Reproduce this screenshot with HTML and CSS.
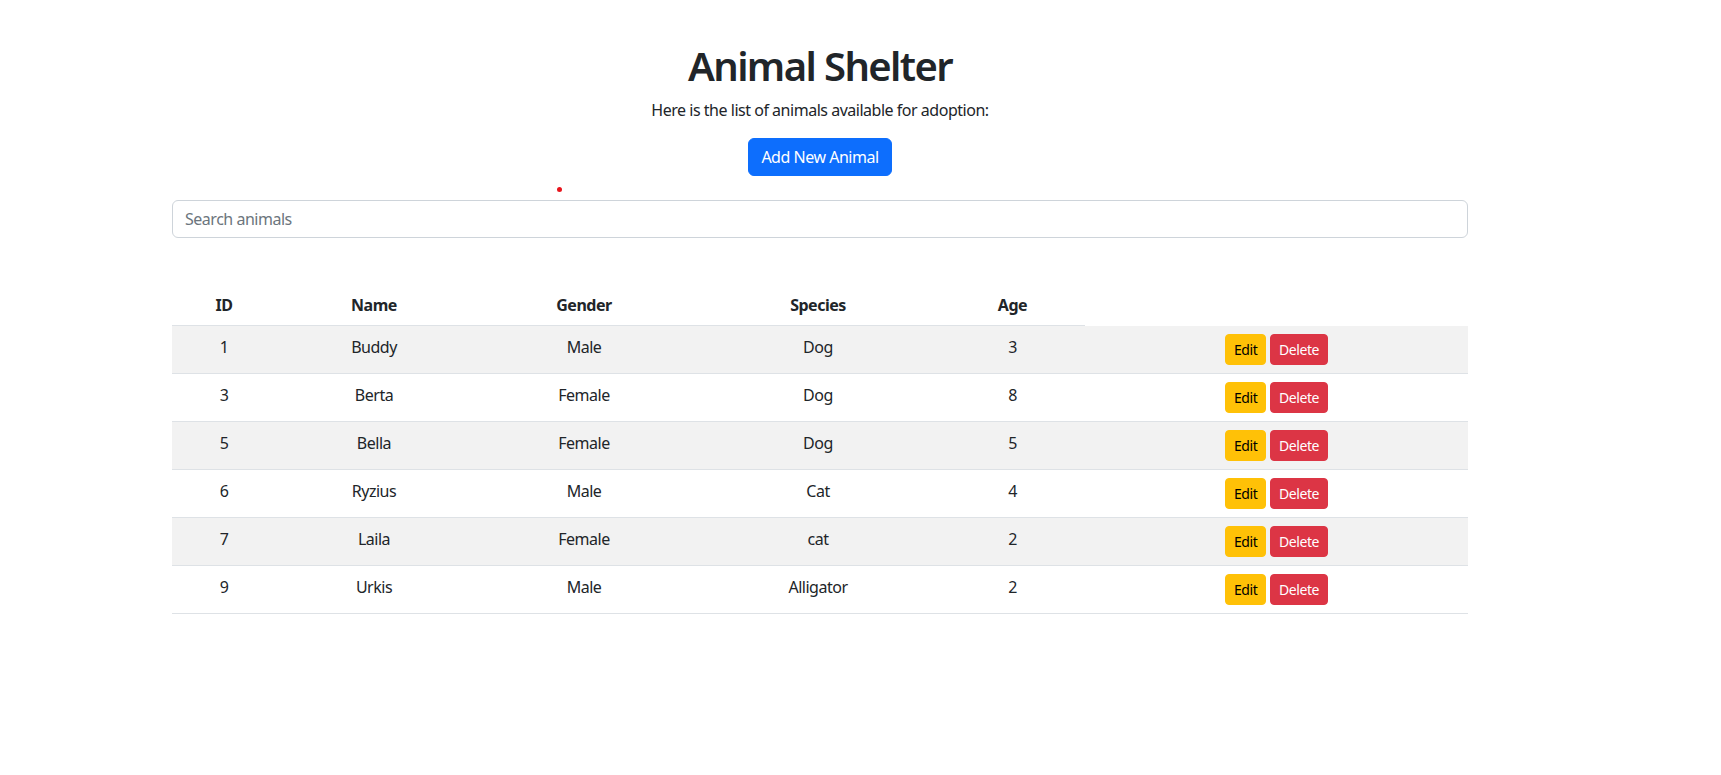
FILE: index.html
```html
<!DOCTYPE html>
<html lang="en">
<head>
<meta charset="utf-8">
<title>Animal Shelter</title>
<link rel="stylesheet" href="styles.css">
</head>
<body>
<div class="container">
  <header class="intro">
    <h1 class="title">Animal Shelter</h1>
    <p class="lead-text">Here is the list of animals available for adoption:</p>
    <button class="btn btn-primary">Add New Animal</button>
  </header>
  <div class="marker-row"><span class="marker-dot"></span></div>
  <input class="search" type="text" placeholder="Search animals">
  <table class="animals">
    <colgroup>
      <col class="c-id"><col class="c-name"><col class="c-gender"><col class="c-species"><col class="c-age"><col class="c-actions">
    </colgroup>
    <thead>
      <tr><th>ID</th><th>Name</th><th>Gender</th><th>Species</th><th>Age</th></tr>
    </thead>
    <tbody>
      <tr><td>1</td><td>Buddy</td><td>Male</td><td>Dog</td><td>3</td><td><button class="btn btn-sm btn-warning">Edit</button> <button class="btn btn-sm btn-danger">Delete</button></td></tr>
      <tr><td>3</td><td>Berta</td><td>Female</td><td>Dog</td><td>8</td><td><button class="btn btn-sm btn-warning">Edit</button> <button class="btn btn-sm btn-danger">Delete</button></td></tr>
      <tr><td>5</td><td>Bella</td><td>Female</td><td>Dog</td><td>5</td><td><button class="btn btn-sm btn-warning">Edit</button> <button class="btn btn-sm btn-danger">Delete</button></td></tr>
      <tr><td>6</td><td>Ryzius</td><td>Male</td><td>Cat</td><td>4</td><td><button class="btn btn-sm btn-warning">Edit</button> <button class="btn btn-sm btn-danger">Delete</button></td></tr>
      <tr><td>7</td><td>Laila</td><td>Female</td><td>cat</td><td>2</td><td><button class="btn btn-sm btn-warning">Edit</button> <button class="btn btn-sm btn-danger">Delete</button></td></tr>
      <tr><td>9</td><td>Urkis</td><td>Male</td><td>Alligator</td><td>2</td><td><button class="btn btn-sm btn-warning">Edit</button> <button class="btn btn-sm btn-danger">Delete</button></td></tr>
    </tbody>
  </table>
</div>
</body>
</html>
```
FILE: styles.css
```css
* { box-sizing: border-box; }
html, body { margin: 0; padding: 0; background: #fff; }
body {
  font-family: "Noto Sans", "Open Sans", sans-serif;
  font-size: 16px;
  line-height: 1.5;
  letter-spacing: -0.03em;
  color: #212529;
}
.container {
  width: 1320px;
  margin-left: 160px;
  padding: 42px 12px 0;
}
.intro { text-align: center; }
.title {
  margin: 0 0 8px;
  font-size: 40px;
  font-weight: 600;
  line-height: 1.2;
  letter-spacing: -0.04em;
}
.lead-text { margin: 0 0 16px; }
.btn {
  display: inline-block;
  font-family: inherit;
  font-size: 16px;
  line-height: 24px;
  letter-spacing: -0.03em;
  padding: 6px 12px;
  border: 1px solid transparent;
  border-radius: 6px;
  cursor: pointer;
  vertical-align: middle;
}
.btn-primary { background: #0d6efd; border-color: #0d6efd; color: #fff; }
.btn-sm { font-size: 14px; line-height: 21px; padding: 4px 8px; border-radius: 4px; }
.btn-warning { background: #ffc107; border-color: #ffc107; color: #000; }
.btn-danger { background: #dc3545; border-color: #dc3545; color: #fff; }
.marker-row { position: relative; height: 24px; }
.marker-dot {
  position: absolute;
  left: 385px;
  top: 11px;
  width: 5px;
  height: 5px;
  border-radius: 50%;
  background: #e8141c;
}
.search {
  display: block;
  width: 100%;
  height: 38px;
  padding: 6px 12px;
  font-family: inherit;
  font-size: 16px;
  line-height: 24px;
  letter-spacing: -0.03em;
  color: #212529;
  border: 1px solid #ced4da;
  border-radius: 6px;
  margin-bottom: 47px;
}
.search::placeholder { color: #6c757d; }
.animals {
  width: 100%;
  border-collapse: collapse;
  table-layout: fixed;
}
.c-id { width: 104px; }
.c-name { width: 196px; }
.c-gender { width: 224px; }
.c-species { width: 244px; }
.c-age { width: 145px; }
.animals th, .animals td {
  padding: 8px;
  text-align: center;
  border-bottom: 1px solid #dee2e6;
  vertical-align: middle;
}
.animals td { padding-top: 6px; padding-bottom: 10px; }
.animals th { font-weight: 700; }
.animals tbody tr:nth-child(odd) td { background: #f2f2f2; }
.animals td .btn { margin-top: 2px; margin-bottom: -2px; }
```
